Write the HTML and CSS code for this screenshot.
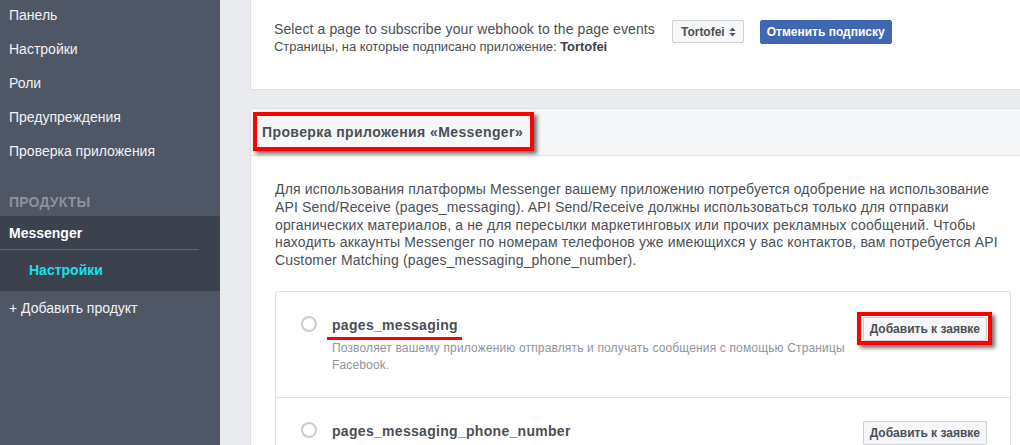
FILE: index.html
```html
<!DOCTYPE html>
<html lang="ru">
<head>
<meta charset="utf-8">
<link rel="stylesheet" href="styles.css">
</head>
<body>
<div class="layout">
  <nav class="sidebar">
    <div class="nav-list">
      <a class="nav-item">Панель</a>
      <a class="nav-item">Настройки</a>
      <a class="nav-item">Роли</a>
      <a class="nav-item">Предупреждения</a>
      <a class="nav-item">Проверка приложения</a>
    </div>
    <div class="nav-heading">Продукты</div>
    <div class="product">
      <div class="product-name">Messenger</div>
      <a class="product-sub">Настройки</a>
    </div>
    <a class="nav-item">+ Добавить продукт</a>
  </nav>

  <main class="main">
    <section class="card card-webhook">
      <div class="webhook-text">
        <div class="webhook-line">Select a page to subscribe your webhook to the page events</div>
        <div class="webhook-sub">Страницы, на которые подписано приложение: <b>Tortofei</b></div>
      </div>
      <div class="select">Tortofei
        <svg class="select-arrows" width="7" height="10" viewBox="0 0 7 10"><path d="M3.5 0.5 L6.5 4 H0.5 Z M3.5 9.5 L6.5 6 H0.5 Z" fill="#4b4f56"/></svg>
      </div>
      <button class="btn-primary">Отменить подписку</button>
    </section>

    <section class="card card-review">
      <header class="card-header">
        <h2 class="card-title">Проверка приложения «Messenger»</h2>
      </header>
      <div class="card-body">
        <p class="intro">Для использования платформы Messenger вашему приложению потребуется одобрение на использование API Send/Receive (pages_messaging). API Send/Receive должны использоваться только для отправки органических материалов, а не для пересылки маркетинговых или прочих рекламных сообщений. Чтобы находить аккаунты Messenger по номерам телефонов уже имеющихся у вас контактов, вам потребуется API Customer Matching (pages_messaging_phone_number).</p>

        <div class="perm-list">
          <div class="perm">
            <span class="radio"></span>
            <div class="perm-info">
              <div class="perm-name underlined">pages_messaging</div>
              <div class="perm-desc">Позволяет вашему приложению отправлять и получать сообщения с помощью Страницы Facebook.</div>
            </div>
            <button class="btn-add highlighted">Добавить к заявке</button>
          </div>
          <div class="perm perm-second">
            <span class="radio"></span>
            <div class="perm-info">
              <div class="perm-name">pages_messaging_phone_number</div>
            </div>
            <button class="btn-add">Добавить к заявке</button>
          </div>
        </div>
      </div>
    </section>
  </main>
</div>
</body>
</html>
```

FILE: styles.css
```css
* { box-sizing: border-box; }
html, body {
  margin: 0;
  padding: 0;
  width: 1020px;
  height: 445px;
  overflow: hidden;
  background: #e9ebee;
  font-family: "Liberation Sans", Arial, sans-serif;
}
.layout {
  display: flex;
  align-items: flex-start;
  height: 445px;
}

/* Sidebar */
.sidebar {
  width: 220px;
  flex: 0 0 220px;
  height: 445px;
  background: #4f5665;
  display: flex;
  flex-direction: column;
}
.nav-list {
  margin-top: -2px;
  display: flex;
  flex-direction: column;
}
.nav-item {
  display: block;
  height: 34px;
  line-height: 34px;
  padding-left: 9px;
  font-size: 14px;
  color: #f2f3f5;
}
.nav-heading {
  height: 48px;
  padding: 26px 0 6px 9px;
  line-height: 16px;
  font-size: 14px;
  font-weight: bold;
  text-transform: uppercase;
  color: #8d929b;
  letter-spacing: 0.2px;
}
.product {
  background: #3b414d;
  height: 75px;
}
.product-name {
  height: 34px;
  line-height: 34px;
  padding-left: 9px;
  margin-right: 21px;
  font-size: 14px;
  font-weight: bold;
  color: #ffffff;
  border-bottom: 1px solid #5d6472;
}
.product-sub {
  display: block;
  height: 40px;
  line-height: 40px;
  padding-left: 29px;
  font-size: 14px;
  font-weight: bold;
  color: #14e0ef;
}

/* Main */
.main {
  flex: 0 0 auto;
  padding-left: 30px;
  display: flex;
  flex-direction: column;
  gap: 18px;
}
.card {
  width: 786px;
  background: #fff;
  border: 1px solid #dddfe2;
  border-radius: 3px;
}
.card-webhook {
  height: 91px;
  margin-top: -1px;
  border-top: none;
  border-radius: 0 0 3px 3px;
  display: flex;
  align-items: flex-start;
  padding: 21px 0 0 23px;
}
.webhook-text {
  color: #4b4f56;
}
.webhook-line {
  font-size: 14px;
  line-height: 18px;
  letter-spacing: 0.1px;
}
.webhook-sub {
  margin-top: 1px;
  font-size: 13px;
  line-height: 16px;
  letter-spacing: -0.05px;
}
.webhook-sub b { color: #3d4148; }
.select {
  margin-left: 17px;
  height: 23px;
  padding: 0 7px 0 8px;
  border: 1px solid #ced0d4;
  border-radius: 2px;
  background: #f6f7f9;
  font-size: 12px;
  font-weight: bold;
  color: #4b4f56;
  display: flex;
  align-items: center;
  gap: 4px;
}
.btn-primary {
  margin-left: 16px;
  height: 24px;
  padding: 0 6px;
  border: 1px solid #4267b2;
  border-radius: 2px;
  background: #4267b2;
  color: #fff;
  font-family: inherit;
  font-size: 12px;
  font-weight: bold;
}

.card-header {
  height: 47px;
  background: #f6f7f9;
  border-bottom: 1px solid #e5e5e5;
  display: flex;
  align-items: center;
  padding-left: 11px;
  border-radius: 3px 3px 0 0;
}
.card-title {
  position: relative;
  margin: 0;
  font-size: 14px;
  line-height: 18px;
  font-weight: bold;
  color: #4b4f56;
  letter-spacing: 0.4px;
}
.card-title::after {
  content: "";
  position: absolute;
  left: -9px;
  right: -11px;
  top: -11px;
  bottom: -10px;
  border: 4px solid #ff0000;
  box-shadow: 3px 3px 4px rgba(0,0,0,0.55);
}
.card-body {
  padding: 25px 24px 0 24px;
}
.intro {
  margin: 0;
  font-size: 14px;
  line-height: 17.75px;
  letter-spacing: 0.15px;
  color: #4b4f56;
}
.perm-list {
  margin-top: 21px;
  border: 1px solid #dddfe2;
  border-radius: 3px;
}
.perm {
  display: flex;
  align-items: flex-start;
  padding: 24px 23px 23px 25px;
}
.perm-second {
  border-top: 1px solid #dddfe2;
  padding-top: 24px;
  height: 60px;
}
.radio {
  flex: 0 0 16px;
  width: 16px;
  height: 16px;
  border: 2px solid #c9ccd1;
  border-radius: 50%;
  background: #fff;
}
.perm-info {
  flex: 1;
  padding-left: 15px;
  padding-right: 12px;
}
.perm-name {
  position: relative;
  display: inline-block;
  font-size: 14px;
  line-height: 16px;
  font-weight: bold;
  color: #4b4f56;
  letter-spacing: 0.3px;
}
.underlined::after {
  content: "";
  position: absolute;
  left: -5px;
  right: -4px;
  top: 20px;
  height: 3px;
  background: #ff0000;
}
.perm-desc {
  margin-top: 6px;
  font-size: 12px;
  line-height: 17px;
  letter-spacing: 0.15px;
  color: #90949c;
}
.btn-add {
  position: relative;
  margin-top: 1px;
  height: 24px;
  padding: 0 6px;
  border: 1px solid #ced0d4;
  border-radius: 2px;
  background: #f6f7f9;
  color: #4b4f56;
  font-family: inherit;
  font-size: 12px;
  font-weight: bold;
}
.perm-second .btn-add { margin-top: -1px; }
.highlighted::after {
  content: "";
  position: absolute;
  left: -7px;
  right: -6px;
  top: -6px;
  bottom: -5px;
  border: 4px solid #ff0000;
  box-shadow: 3px 3px 4px rgba(0,0,0,0.55);
}
```
